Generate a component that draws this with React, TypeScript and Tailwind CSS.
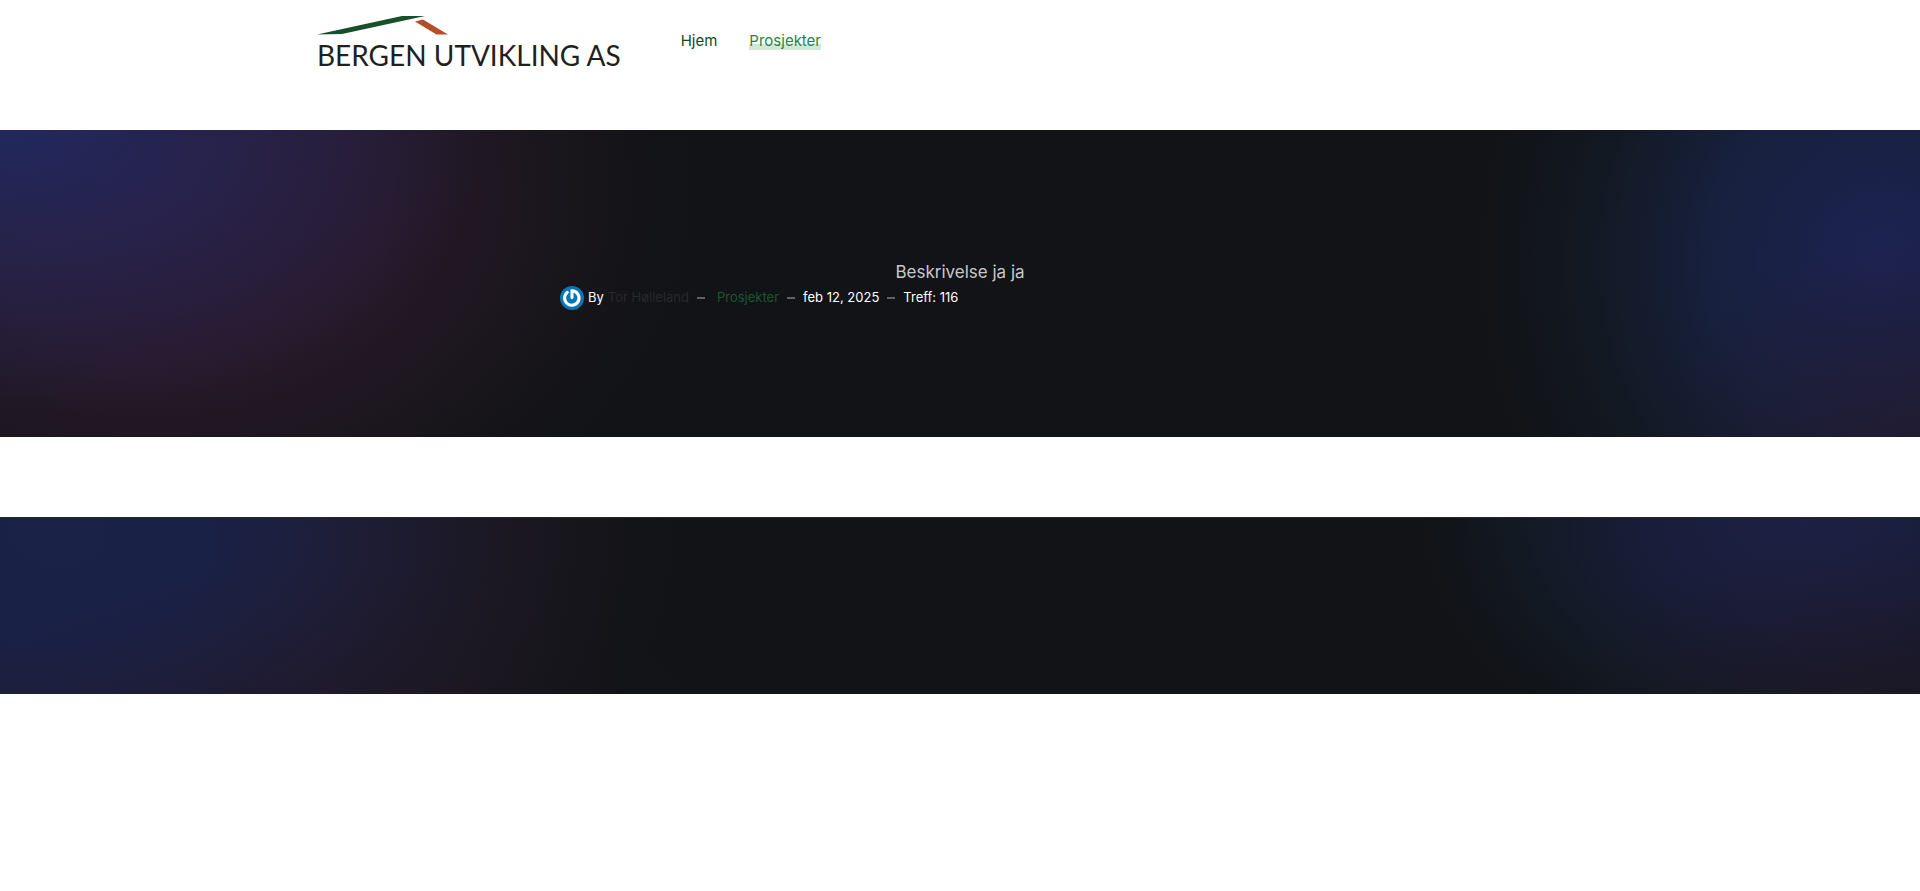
const Logo = () => {
  return (
    <a href="#" className="block text-[#221f20]">
      <svg viewBox="0 0 132 20" className="h-5 w-[132px]" aria-hidden="true">
        <path d="M0 18.6 L85 0 H108 L25 18 Z" fill="#17502b" />
        <path d="M98 5.5 L106 3.5 L131 18.4 H119.5 Z" fill="#b64e28" />
      </svg>
      <span className="block whitespace-nowrap font-[Lato,sans-serif] text-[28px] leading-[38px]">BERGEN UTVIKLING AS</span>
    </a>
  );
};

const Avatar = () => {
  return (
    <svg viewBox="0 0 24 24" className="h-6 w-6" role="img" aria-label="Tor Hølleland">
      <circle cx="12" cy="12" r="12" fill="#0a75b5" />
      <path d="M7.3 6.4 A7.2 7.2 0 1 0 12 4.8 V11.5" fill="none" stroke="#fff" strokeWidth="3.1" strokeLinecap="round" />
    </svg>
  );
};

const Dash = () => <span className="h-0.5 w-2 bg-[#5f6165]" />;

const App = () => {
  return (
    <div className="min-h-screen bg-white font-[Inter,sans-serif]">
      <header className="mx-auto flex h-[130px] max-w-[1286px] items-start pt-4">
        <Logo />
        <nav className="ml-15 flex gap-8 pt-3 text-[15px] leading-[26px]">
          <a href="#" className="text-[#0f4a22]">
            Hjem
          </a>
          <a href="#" className="bg-[linear-gradient(#d3e6da,#d3e6da)] bg-[length:100%_6px] bg-[position:0_16px] bg-no-repeat text-[#1f8443]">
            Prosjekter
          </a>
        </nav>
      </header>

      <main>
        <section className="h-[307px] bg-[#111316] bg-[radial-gradient(ellipse_26%_100%_at_0%_-5%,#1e2d6ccc,#202c6a77_40%,#1d2f7200),radial-gradient(ellipse_28%_130%_at_8%_20%,#2d1b36,#2a1a2d_38%,#201722_60%,#17151a_82%,#11131600),radial-gradient(ellipse_14%_75%_at_100%_110%,#271828aa,#2a182800),radial-gradient(ellipse_21%_140%_at_98%_42%,#1d2352,#17203e_42%,#131923_72%,#11131600)] px-4 pt-32">
          <div className="mx-auto max-w-[800px]">
            <p className="text-center text-[17px] leading-7 text-[#c8c8c9]">Beskrivelse ja ja</p>
            <div className="flex h-6 items-center text-[13px] text-white">
              <Avatar />
              <span className="ml-1">By</span>
              <a href="#" className="ml-1 mr-2 text-[#27292c]">
                Tor Hølleland
              </a>
              <Dash />
              <a href="#" className="ml-3 mr-2 text-[#17592c]">
                Prosjekter
              </a>
              <Dash />
              <time dateTime="2025-02-12" className="mx-2">
                feb 12, 2025
              </time>
              <Dash />
              <span className="ml-2">Treff: 116</span>
            </div>
          </div>
        </section>
      </main>

      <footer className="mt-20 h-[177px] border-t border-[#24262a] bg-[#111316] bg-[radial-gradient(ellipse_20%_90%_at_17%_115%,#24172444,#2a162600),radial-gradient(ellipse_32%_240%_at_3%_10%,#1a2248,#1a2146_25%,#1e1c33_52%,#1a1720_75%,#11131600),radial-gradient(ellipse_16%_90%_at_98%_100%,#21172699,#22182500),radial-gradient(ellipse_20%_150%_at_94%_0%,#1d2044,#191d3a_40%,#131923_75%,#11131600)]" />
    </div>
  );
};

export default App;
